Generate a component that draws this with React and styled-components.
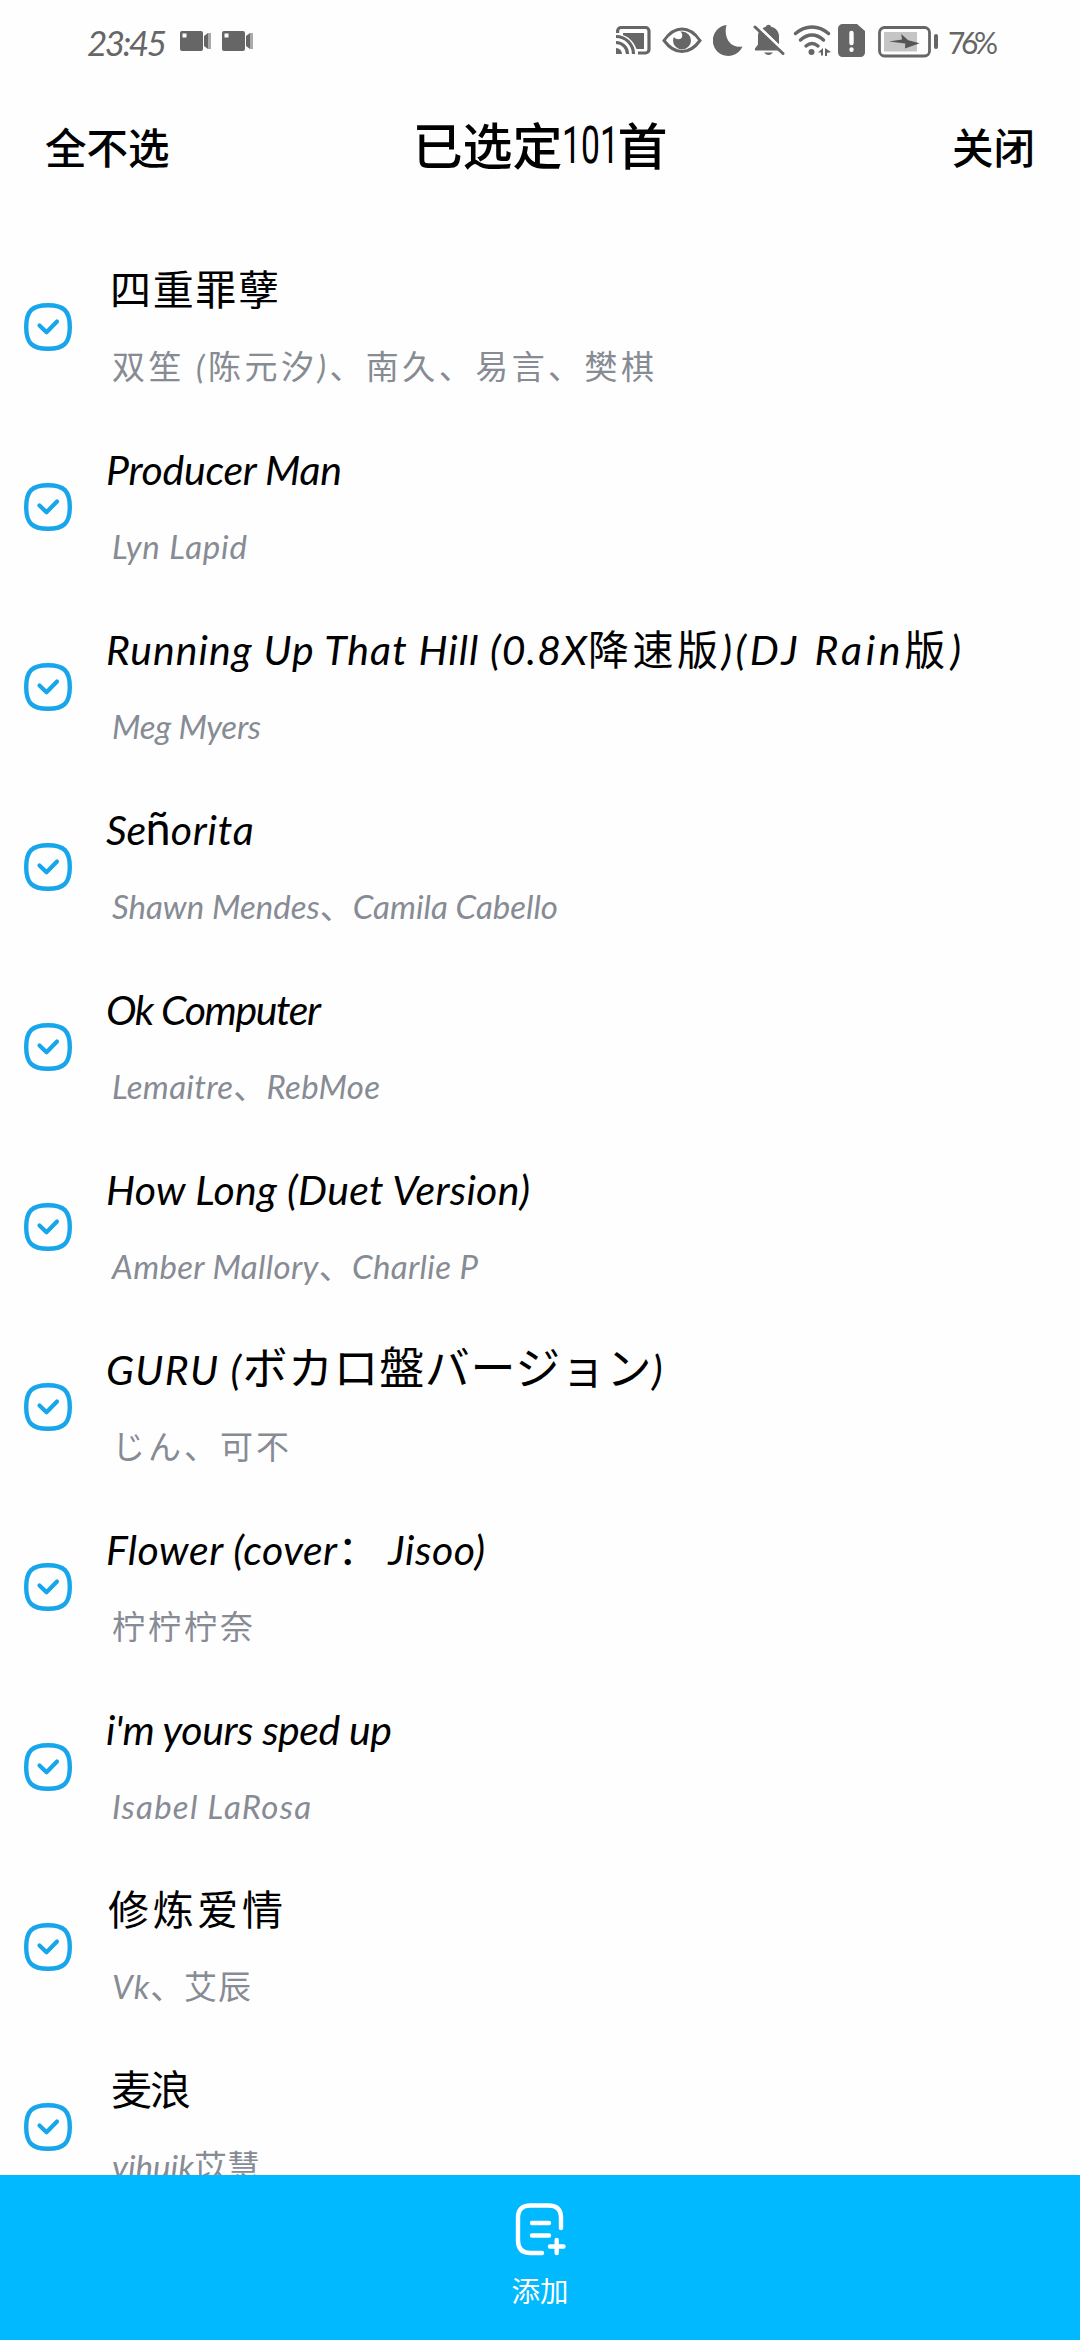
import React, { useLayoutEffect, useRef, useState } from "react";
import styled, { createGlobalStyle, css } from "styled-components";

const GlobalStyle = createGlobalStyle`
  * { box-sizing: border-box; }
  body { margin: 0; background: #fefefe; }
`;

const hand = css`
  font-family: Lato, "Noto Sans CJK SC", sans-serif;
  font-style: italic;
  font-synthesis: none;
`;

const Screen = styled.div`
  width: 1080px;
  height: 2340px;
  display: flex;
  flex-direction: column;
  overflow: hidden;
  background: #fefefe;
  color: #000;
`;

const StatusBar = styled.div`
  height: 85px;
  flex: none;
  display: flex;
  align-items: flex-start;
  padding: 22px 82px 0 87px;
  color: #666;
`;

const StatusText = styled.div`
  ${hand}
  font-style: ${(p) => (p.$upright ? "normal" : "italic")};
  width: ${(p) => p.$width}px;
  margin-left: ${(p) => p.$gap || 0}px;
  font-size: ${(p) => p.$size}px;
  line-height: 40px;
  white-space: nowrap;
`;

const StatusIcon = styled.svg`
  flex: none;
  display: block;
  width: ${(p) => p.$width}px;
  height: 38px;
  margin-left: ${(p) => p.$gap}px;
  fill: none;
  stroke: currentColor;
`;

const Spacer = styled.div`
  flex: 1;
`;

const Header = styled.header`
  height: 152px;
  flex: none;
  display: grid;
  grid-template-columns: 1fr auto 1fr;
  align-items: center;
  padding: 0 45px 30px 45px;
`;

const HeaderButton = styled.button`
  border: 0;
  padding: 0;
  background: none;
  color: #000;
  font: 500 41.5px/62px "Noto Sans CJK SC", sans-serif;
  justify-self: ${(p) => p.$side};
`;

const HeaderTitle = styled.h1`
  margin: 0;
  display: flex;
  font: 500 50px/74px "Noto Sans CJK SC", sans-serif;
`;

const Count = styled.span`
  width: 55px;
  display: flex;
  justify-content: center;
  font-family: Roboto, sans-serif;
  font-weight: 400;
  font-size: 51px;
  line-height: 80px;
  transform: scaleX(0.66);
`;

const List = styled.main`
  flex: 1;
  min-height: 0;
  overflow: hidden;
`;

const Row = styled.div`
  height: 180px;
  display: flex;
  padding-left: 24px;
`;

const CheckIcon = styled.svg`
  flex: none;
  width: 48px;
  height: 48px;
  margin-top: 66px;
  fill: none;
  stroke: #18a6ea;
  stroke-linecap: round;
  stroke-linejoin: round;
`;

const Texts = styled.div`
  display: flex;
  flex-direction: column;
  align-items: flex-start;
  padding: 23px 0 0 34px;
`;

const Title = styled.div`
  ${hand}
  display: flex;
  align-items: baseline;
  height: 60px;
  font-size: 41px;
  line-height: 60px;
  white-space: pre;
  margin-left: ${(p) => p.$indent || 0}px;
`;

const Artist = styled.div`
  ${hand}
  height: 50px;
  margin: 21px 0 0 6px;
  font-size: 33px;
  line-height: 50px;
  white-space: pre;
  color: #868b94;
`;

const Upright = styled.span`
  font-family: Roboto, "Noto Sans CJK JP", sans-serif;
  font-style: normal;
  font-size: 45px;
  line-height: 1;
`;

const Footer = styled.footer`
  height: 165px;
  flex: none;
  display: flex;
  flex-direction: column;
  align-items: center;
  padding-top: 26px;
  background: #00b9ff;
  color: #fff;
`;

const AddIcon = styled.svg`
  width: 54px;
  height: 56px;
  fill: none;
  stroke: #fff;
  stroke-width: 4.4;
  stroke-linecap: round;
`;

const AddLabel = styled.div`
  font: 400 28.5px/36px "Noto Sans CJK SC", sans-serif;
  margin-top: 15px;
`;

const Run = styled.span`
  display: inline-block;
`;

/* Spreads the letters of a run so that it takes the given width. */
function Fit({ width, children }) {
  const ref = useRef(null);
  const [spacing, setSpacing] = useState(0);
  useLayoutEffect(() => {
    const count = Array.from(ref.current.textContent).length;
    setSpacing((width - ref.current.getBoundingClientRect().width) / Math.max(1, count - 1));
  }, [width]);
  return (
    <Run ref={ref} style={{ letterSpacing: `${spacing}px` }}>
      {children}
    </Run>
  );
}

const songs = [
  { title: [["四重罪孽", 169]], indent: 4, artist: "双笙 (陈元汐)、南久、易言、樊棋", artistWidth: 542 },
  { title: [["Producer Man", 236]], artist: "Lyn Lapid", artistWidth: 135 },
  { title: [["Running Up That Hill (0.8X", 481], ["降速版)", 144], ["(DJ Rain", 165], ["版)", 57]], artist: "Meg Myers", artistWidth: 149 },
  { title: [["Se", 40], ["ñ", 25, true], ["orita", 83]], artist: "Shawn Mendes、Camila Cabello", artistWidth: 446 },
  { title: [["Ok Computer", 215]], artist: "Lemaitre、RebMoe", artistWidth: 268 },
  { title: [["How Long (Duet Version)", 424]], artist: "Amber Mallory、Charlie P", artistWidth: 366 },
  { title: [["GURU (", 135], ["ボカロ盤バージョン", 409, true], [")", 14]], artist: "じん、可不", artistWidth: 177 },
  { title: [["Flower (cover： Jisoo)", 379]], artist: "柠柠柠奈", artistWidth: 141 },
  { title: [["i'm yours sped up", 286]], artist: "Isabel LaRosa", artistWidth: 199 },
  { title: [["修炼爱情", 175]], indent: 2, artist: "Vk、艾辰", artistWidth: 139 },
  { title: [["麦浪", 80]], indent: 5, artist: "yihuik苡慧", artistWidth: 148 },
];

function Camera({ gap }) {
  return (
    <StatusIcon $width={31} $gap={gap} viewBox="0 0 31 38">
      <path
        fill="#666"
        stroke="none"
        fillRule="evenodd"
        d="M2 9h19a2 2 0 0 1 2 2v16a2 2 0 0 1-2 2H2a2 2 0 0 1-2-2V11a2 2 0 0 1 2-2zM2.500 11.500v4h4v-4z"
      />
      <path fill="#666" stroke="none" d="M24 14l4-3v16l-4-3z" />
      <path fill="#aaa" stroke="none" d="M28 11h3v16h-3z" />
    </StatusIcon>
  );
}

function SystemIcons() {
  return (
    <>
      <StatusIcon $width={35} $gap={0} viewBox="0 0 35 38" strokeWidth="3.200">
        <path d="M1.600 11V9a3.500 3.500 0 0 1 3.500-3.500H29.500A3.500 3.500 0 0 1 33 9v18.500a3.500 3.500 0 0 1-3.500 3.500H22" />
        <path fill="#666" stroke="none" d="M7 11h21v16h-7.500C18 20 13 15 7 13z" />
        <path d="M0 14.500A17.500 17.500 0 0 1 17.500 32M0 20.500A11.500 11.500 0 0 1 11.500 32" />
        <path fill="#666" stroke="none" d="M0 26a6 6 0 0 1 6 6H0z" />
      </StatusIcon>
      <StatusIcon $width={40} $gap={11} viewBox="0 0 40 38" strokeWidth="3">
        <path d="M2 18.500Q10 7 20 7t18 11.500Q30 29.500 20 29.500T2 18.500z" />
        <path fill="#666" stroke="none" d="M20 9.500a9 9 0 1 1-9 9q0-2 1-3.500c2 3 7 3 8 0 .8-2 0-4-1.500-5.500z" />
      </StatusIcon>
      <StatusIcon $width={30} $gap={11} viewBox="0 0 30 38">
        <path fill="#666" stroke="none" d="M13.500 3A15.500 15.500 0 1 0 29.500 24.500C18 27 10 16 13.500 3z" />
      </StatusIcon>
      <StatusIcon $width={32} $gap={10} viewBox="0 0 32 38">
        <path fill="#666" stroke="none" d="M6 9.500L25.500 28.500H2v-2l3-4V14q0-2.500 1-4.500zM9.500 6.500Q11 5 13 4.700C13 2 18 2 18 4.700c5 1 8 5 8 9.300v8.500L9.500 6.500z" />
        <path strokeWidth="3" strokeLinecap="round" d="M2 5l28 26.500" />
        <path stroke="#fefefe" strokeWidth="2" d="M4.500 3.200l27 26" />
        <path fill="#666" stroke="none" d="M11 30.500h9q-4.500 5-9 0z" />
      </StatusIcon>
      <StatusIcon $width={38} $gap={8} viewBox="0 0 38 38" strokeWidth="3.500" strokeLinecap="round">
        <path d="M2.500 11.500Q10 5 19 5t16.500 6.500M7.500 18Q13 13 19 13t11.500 5M13 24q6-5 12 0" />
        <circle cx="18.500" cy="30" r="3" fill="#666" stroke="none" />
        <path fill="#666" stroke="none" d="M30 26v7.500h-2v-3h-3zM32 26l6 4-4 1v3h-2z" />
      </StatusIcon>
      <StatusIcon $width={27} $gap={7} viewBox="0 0 27 38">
        <path fill="#666" stroke="none" d="M5 2h14l8 7v21.500a4.500 4.500 0 0 1-4.500 4.500h-18A4.500 4.500 0 0 1 0 30.500V6.500A4.500 4.500 0 0 1 5 2z" />
        <path stroke="#fefefe" strokeWidth="4.400" strokeLinecap="round" d="M13.500 11v10M13.500 27.500v.3" />
      </StatusIcon>
      <StatusIcon $width={61} $gap={13} viewBox="0 0 61 38">
        <rect x="1.500" y="5.500" width="50" height="28.500" rx="5" strokeWidth="2.800" />
        <rect x="6" y="10" width="33" height="19.500" fill="#c5c5c5" stroke="none" />
        <path fill="#555" stroke="none" d="M11 19.500l13-2-.8-5.500 7 6.200 11.500 3-14.700 5.300.3-5z" />
        <rect x="56" y="12" width="4" height="15" rx="2" fill="#666" stroke="none" />
      </StatusIcon>
    </>
  );
}

function Check() {
  return (
    <CheckIcon viewBox="0 0 48 48">
      <path strokeWidth="4.400" d="M24 2.200c16 0 21.800 5.800 21.800 21.800S40 45.800 24 45.800 2.200 40 2.200 24 8 2.200 24 2.200z" />
      <path strokeWidth="4.200" d="M15.500 22.500l7 6.700L33 18.500" />
    </CheckIcon>
  );
}

export default function App() {
  return (
    <Screen>
      <GlobalStyle />
      <StatusBar>
        <StatusText $width={80} $size={35}>
          <Fit width={80}>23:45</Fit>
        </StatusText>
        <Camera gap={13} />
        <Camera gap={11} />
        <Spacer />
        <SystemIcons />
        <StatusText $width={50} $size={30} $gap={9} $upright>
          <Fit width={50}>76%</Fit>
        </StatusText>
      </StatusBar>
      <Header>
        <HeaderButton $side="start">全不选</HeaderButton>
        <HeaderTitle>
          已选定<Count>101</Count>首
        </HeaderTitle>
        <HeaderButton $side="end">关闭</HeaderButton>
      </Header>
      <List>
        {songs.map((song) => (
          <Row key={song.artist}>
            <Check />
            <Texts>
              <Title $indent={song.indent}>
                {song.title.map(([text, width, upright]) => (
                  <Fit key={text} width={width}>
                    {upright ? <Upright>{text}</Upright> : text}
                  </Fit>
                ))}
              </Title>
              <Artist>
                <Fit width={song.artistWidth}>{song.artist}</Fit>
              </Artist>
            </Texts>
          </Row>
        ))}
      </List>
      <Footer>
        <AddIcon viewBox="0 0 54 56">
          <path d="M48 27V17Q48 4.500 35.500 4.500H17.500Q5 4.500 5 17v22.500Q5 52 17.500 52H29M19 22h17M19 34.500h17M37 45.500h13.500M43.700 39v13" />
        </AddIcon>
        <AddLabel>添加</AddLabel>
      </Footer>
    </Screen>
  );
}
